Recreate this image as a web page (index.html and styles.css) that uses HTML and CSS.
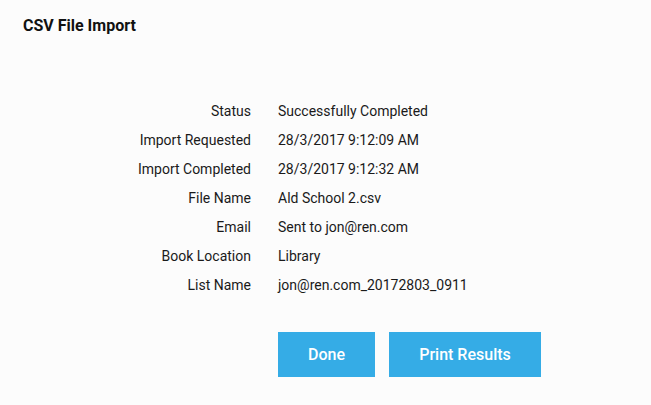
FILE: index.html
```html
<!DOCTYPE html>
<html>
<head>
<meta charset="utf-8">
<link rel="stylesheet" href="styles.css">
</head>
<body>
<div class="page">
  <h1 class="title">CSV File Import</h1>
  <div class="details">
    <div class="label">Status</div><div class="value">Successfully Completed</div>
    <div class="label">Import Requested</div><div class="value">28/3/2017 9:12:09 AM</div>
    <div class="label">Import Completed</div><div class="value">28/3/2017 9:12:32 AM</div>
    <div class="label">File Name</div><div class="value">Ald School 2.csv</div>
    <div class="label">Email</div><div class="value">Sent to jon@ren.com</div>
    <div class="label">Book Location</div><div class="value">Library</div>
    <div class="label">List Name</div><div class="value">jon@ren.com_20172803_0911</div>
  </div>
  <div class="actions">
    <button class="btn btn-done">Done</button>
    <button class="btn btn-print">Print Results</button>
  </div>
</div>
</body>
</html>
```
FILE: styles.css
```css
html, body {
  margin: 0;
  padding: 0;
  background: #fcfcfc;
}
body {
  font-family: Roboto, "Liberation Sans", sans-serif;
  color: #1a1a1a;
  width: 651px;
  height: 405px;
  overflow: hidden;
}
.page {
  padding-top: 16px;
}
.title {
  margin: 0 0 0 23px;
  font-size: 16px;
  line-height: 19px;
  font-weight: 700;
  color: #111;
}
.details {
  margin-top: 62px;
  display: grid;
  grid-template-columns: 251px 1fr;
  column-gap: 27px;
  font-size: 14px;
  line-height: 29px;
}
.label {
  text-align: right;
}
.actions {
  margin-top: 32px;
  padding-left: 278px;
  display: flex;
  gap: 14px;
}
.btn {
  border: none;
  background: #35ace6;
  color: #fff;
  font-family: Roboto, "Liberation Sans", sans-serif;
  font-size: 16px;
  font-weight: 500;
  height: 45px;
  padding: 0;
}
.btn-done { width: 97px; }
.btn-print { width: 152px; }
```
